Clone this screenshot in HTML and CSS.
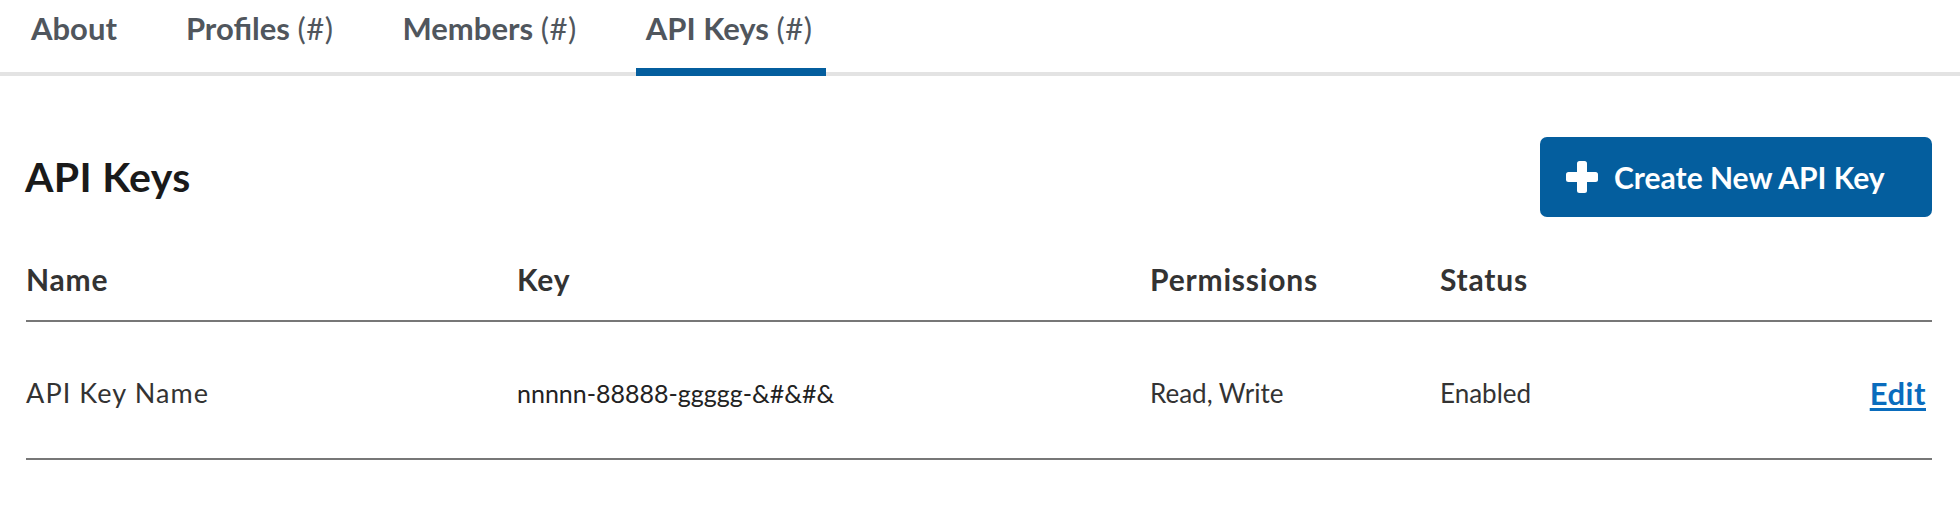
FILE: index.html
```html
<!DOCTYPE html>
<html lang="en">
<head>
<meta charset="utf-8">
<title>API Keys</title>
<link rel="stylesheet" href="styles.css">
</head>
<body>
<nav class="tabs">
  <a class="tab" href="#">About</a>
  <a class="tab" href="#">Profiles <span class="count">(#)</span></a>
  <a class="tab" href="#">Members <span class="count">(#)</span></a>
  <a class="tab active" href="#">API Keys <span class="count">(#)</span></a>
</nav>
<main class="content">
  <header class="section-head">
    <h1 class="title">API Keys</h1>
    <button class="btn-create" type="button">
      <svg class="plus" viewBox="0 0 32 32" width="32" height="32" aria-hidden="true">
        <rect x="11" y="0" width="10" height="32" rx="2.5" fill="#fff"/>
        <rect x="0" y="11" width="32" height="10" rx="2.5" fill="#fff"/>
      </svg>
      <span>Create New API Key</span>
    </button>
  </header>
  <table class="keys">
    <colgroup>
      <col class="c-name">
      <col class="c-key">
      <col class="c-perm">
      <col class="c-status">
      <col class="c-action">
    </colgroup>
    <thead>
      <tr>
        <th>Name</th>
        <th>Key</th>
        <th>Permissions</th>
        <th>Status</th>
        <th></th>
      </tr>
    </thead>
    <tbody>
      <tr>
        <td class="name">API Key Name</td>
        <td class="key">nnnnn-88888-ggggg-&amp;#&amp;#&amp;</td>
        <td>Read, Write</td>
        <td>Enabled</td>
        <td class="action"><a href="#" class="edit">Edit</a></td>
      </tr>
    </tbody>
  </table>
</main>
</body>
</html>
```
FILE: styles.css
```css
* { box-sizing: border-box; }
html, body { margin: 0; padding: 0; background: #fff; }
body {
  font-family: Lato, "Open Sans", sans-serif;
  color: #333;
}
.tabs {
  display: flex;
  align-items: flex-start;
  gap: 46px;
  padding-left: 21px;
  border-bottom: 4px solid #e3e3e3;
}
.tab {
  display: block;
  height: 72px;
  padding: 11px 13px 0 10px;
  font-size: 31px;
  line-height: 34px;
  font-weight: 700;
  color: #50565d;
  text-decoration: none;
}
.tab .count { font-weight: 400; letter-spacing: 0.5px; }
.tab.active {
  height: 76px;
  margin-bottom: -4px;
  border-bottom: 8px solid #045e9e;
}
.content {
  padding: 61px 28px 0 26px;
}
.section-head {
  display: flex;
  justify-content: space-between;
  align-items: center;
}
.title {
  margin: 0 0 0 -1px;
  font-size: 41px;
  line-height: 48px;
  font-weight: 700;
  letter-spacing: 0.3px;
  color: #1a1a1a;
}
.btn-create {
  display: flex;
  align-items: center;
  gap: 16px;
  width: 392px;
  height: 80px;
  padding: 0 0 0 26px;
  border: 0;
  border-radius: 7px;
  background: #045e9e;
  color: #fff;
  font-family: inherit;
  font-size: 30px;
  font-weight: 700;
}
.plus { display: block; flex: none; }
.keys {
  width: 100%;
  margin-top: 20px;
  border-collapse: collapse;
  table-layout: fixed;
}
.c-name { width: 491px; }
.c-key { width: 633px; }
.c-perm { width: 290px; }
.c-status { width: 360px; }
.keys th, .keys td { padding: 0; text-align: left; }
.keys th {
  height: 84px;
  font-size: 30px;
  letter-spacing: 0.8px;
  font-weight: 700;
  color: #333;
  vertical-align: middle;
}
.keys thead tr { border-bottom: 2px solid #777; }
.keys tbody tr { border-bottom: 2px solid #777; }
.keys td {
  height: 138px;
  padding-top: 5px;
  font-size: 26px;
  color: #333;
  vertical-align: middle;
}
.keys td.name { font-size: 27px; letter-spacing: 1.1px; }
.keys td.key { font-size: 25px; color: #222; }
.keys td.action { text-align: right; padding-right: 6px; }
.edit {
  color: #0a6cbd;
  font-weight: 700;
  font-size: 31px;
  letter-spacing: 0.5px;
  text-decoration: underline;
  text-underline-offset: 3px;
}
```
